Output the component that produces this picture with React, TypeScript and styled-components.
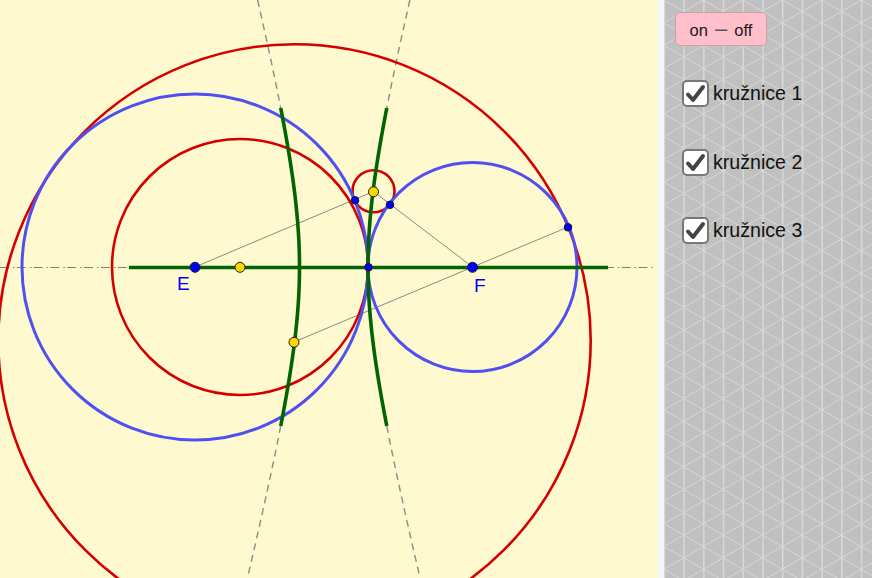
import React from "react";
import styled, { createGlobalStyle } from "styled-components";

const Global = createGlobalStyle`
  html, body {
    margin: 0;
    padding: 0;
    background: #ffffff;
  }
`;

// triangle grid behind the panel, one sheet so the fractional spacing stays exact
const STEP = 19.72;
const ROW = 22.77;
const PANEL_W = 208;
const PANEL_H = 578;

const gridSheet = () => {
  let verticals = "";
  for (let x = 0.4; x < PANEL_W; x += STEP) {
    verticals += `M${x.toFixed(2)} 0V${PANEL_H}`;
  }
  let diagonals = "";
  const slope = ROW / 2 / STEP;
  for (let y = -ROW * 12; y < PANEL_H + ROW * 12; y += ROW) {
    const y1 = y + PANEL_W * slope;
    const y2 = y - PANEL_W * slope;
    diagonals += `M0 ${y.toFixed(2)}L${PANEL_W} ${y1.toFixed(2)}`;
    diagonals += `M0 ${y.toFixed(2)}L${PANEL_W} ${y2.toFixed(2)}`;
  }
  return `<svg xmlns='http://www.w3.org/2000/svg' width='${PANEL_W}' height='${PANEL_H}'><g stroke='#d8d8d8' fill='none'><path stroke-width='1.5' d='${verticals}'/><path stroke-width='1' d='${diagonals}'/></g></svg>`;
};

const Page = styled.div`
  display: flex;
  width: 872px;
  height: 578px;
  overflow: hidden;
`;

const Canvas = styled.svg`
  display: block;
  flex: none;
  width: 658px;
  height: 578px;
  background: #fff9d0;
`;

const Divider = styled.div`
  flex: none;
  width: 6px;
  background: #f6f7f9;
`;

const Panel = styled.div`
  flex: 1;
  display: flex;
  flex-direction: column;
  align-items: flex-start;
  padding: 12px 0 0 11px;
  background-color: #c0c0c0;
  background-image: url("data:image/svg+xml,${encodeURIComponent(gridSheet())}");
  background-repeat: no-repeat;
  font-family: "Liberation Sans", Arial, sans-serif;
`;

const Toggle = styled.button`
  width: 92px;
  height: 34px;
  padding: 0;
  margin-bottom: 34px;
  border: 1px solid #c8a0aa;
  border-radius: 5px;
  background: #ffc0cb;
  color: #1a1a1a;
  font-family: "Liberation Sans", Arial, sans-serif;
  font-size: 16.5px;
`;

const Dash = styled.span`
  margin: 0 2.5px;
  font-size: 22px;
  font-weight: normal;
  color: #555555;
`;

const Options = styled.div`
  display: flex;
  flex-direction: column;
  gap: 41.5px;
  padding-left: 7px;
`;

const Option = styled.label`
  display: flex;
  align-items: center;
  gap: 4px;
  height: 27px;
  font-size: 19.6px;
  color: #111111;
`;

const Box = styled.span`
  display: flex;
  align-items: center;
  justify-content: center;
  box-sizing: border-box;
  width: 27px;
  height: 27px;
  border: 2px solid #777777;
  border-radius: 5px;
  background: #ffffff;
`;

const Label = styled.text`
  font-family: "Liberation Sans", Arial, sans-serif;
  font-size: 19px;
  fill: #0000ff;
`;

const E = { x: 195, y: 267 };
const F = { x: 472.5, y: 267 };

// hyperbola with foci E and F, side = -1 left branch, 1 right branch
const CX = 333.75;
const A = 34.25;
const B2 = 18079;
const branch = (side: number, from: number, to: number) => {
  const pts: string[] = [];
  for (let y = from; y <= to; y += 3) {
    const dy = y - E.y;
    const x = CX + side * A * Math.sqrt(1 + (dy * dy) / B2);
    pts.push(`${x.toFixed(2)},${y}`);
  }
  return pts.join(" ");
};

const circles = [
  { cx: 294.5, cy: 340.5, r: 296.2, color: "#d40000", w: 2.6 },
  { cx: 240, cy: 267, r: 128, color: "#d40000", w: 2.6 },
  { cx: 373.5, cy: 191.2, r: 21, color: "#d40000", w: 2.6 },
  { cx: 195, cy: 267, r: 173, color: "#5050f0", w: 3 },
  { cx: 472.5, cy: 267, r: 104.5, color: "#5050f0", w: 3 },
];

const thinLines = [
  [E.x, E.y, 373.5, 191.5],
  [F.x, F.y, 373.5, 191.5],
  [294, 342, 568, 227],
];

const points = [
  { x: 355, y: 200, r: 3.8, color: "#0000ff" },
  { x: 390, y: 204.5, r: 3.8, color: "#0000ff" },
  { x: 368.5, y: 267, r: 3.8, color: "#0000ff" },
  { x: 568, y: 227, r: 3.8, color: "#0000ff" },
  { x: E.x, y: E.y, r: 5, color: "#0000ff" },
  { x: F.x, y: F.y, r: 5, color: "#0000ff" },
  { x: 240, y: 267, r: 5, color: "#ffd700" },
  { x: 373.5, y: 191.5, r: 5, color: "#ffd700" },
  { x: 294, y: 342, r: 5, color: "#ffd700" },
];

const Figure = () => (
  <Canvas viewBox="0 0 658 578">
    <line x1="0" y1="267.5" x2="653" y2="267.5" stroke="#808078" strokeWidth="1.2" strokeDasharray="9 4 1.5 2.3" />
    {[-1, 1].map((side) => (
      <g key={side} fill="none" stroke="#8f8f84" strokeWidth="1.4" strokeDasharray="7 5">
        <polyline points={branch(side, 0, 108)} />
        <polyline points={branch(side, 426, 578)} />
      </g>
    ))}
    {thinLines.map(([x1, y1, x2, y2], i) => (
      <line key={i} x1={x1} y1={y1} x2={x2} y2={y2} stroke="#8a8a80" strokeWidth="1" />
    ))}
    {circles.map((c, i) => (
      <circle key={i} cx={c.cx} cy={c.cy} r={c.r} fill="none" stroke={c.color} strokeWidth={c.w} />
    ))}
    <line x1="129" y1="267.5" x2="608" y2="267.5" stroke="#006400" strokeWidth="3.4" />
    {[-1, 1].map((side) => (
      <polyline key={side} points={branch(side, 108, 426)} fill="none" stroke="#006400" strokeWidth="3.6" />
    ))}
    {points.map((p, i) => (
      <circle key={i} cx={p.x} cy={p.y + 0.3} r={p.r} fill={p.color} stroke="#1a1a1a" strokeWidth="1" />
    ))}
    <Label x="177" y="290">E</Label>
    <Label x="474" y="292">F</Label>
  </Canvas>
);

const Check = () => (
  <svg width="21" height="19" viewBox="0 0 21 19">
    <path d="M3 10.5 L8 16 L18 3" fill="none" stroke="#444444" strokeWidth="4" strokeLinecap="round" strokeLinejoin="round" />
  </svg>
);

export default function App() {
  return (
    <Page>
      <Global />
      <Figure />
      <Divider />
      <Panel>
        <Toggle>
          on <Dash>–</Dash> off
        </Toggle>
        <Options>
          {["kružnice 1", "kružnice 2", "kružnice 3"].map((name) => (
            <Option key={name}>
              <Box>
                <Check />
              </Box>
              {name}
            </Option>
          ))}
        </Options>
      </Panel>
    </Page>
  );
}
